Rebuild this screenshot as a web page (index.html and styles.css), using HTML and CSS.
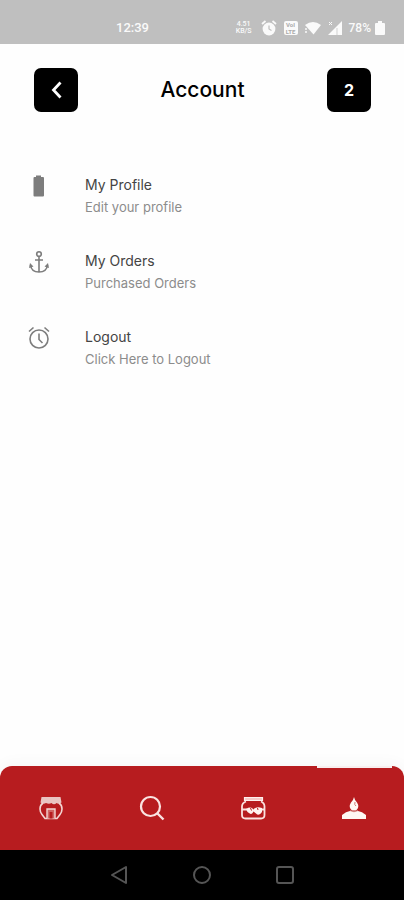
FILE: index.html
```html
<!DOCTYPE html>
<html lang="en">
<head>
<meta charset="utf-8">
<meta name="viewport" content="width=device-width, initial-scale=1">
<title>Account</title>
<link rel="stylesheet" href="styles.css">
</head>
<body>
<div class="status">
  <time class="clock">12:39</time>
  <div class="indicators">
    <span class="speed"><span>4.51</span><span>KB/S</span></span>
    <svg width="16" height="16" viewBox="0 0 16 16" aria-hidden="true"><circle cx="8" cy="9" r="6.4" fill="currentColor"/><path d="M1 4l3.500-3M15 4l-3.500-3" stroke="currentColor" stroke-width="1.800"/><path d="M8 5.500V9l2.500 1.500" fill="none" stroke="#bfbfbf" stroke-width="1.200"/></svg>
    <span class="volte"><span>VoI</span><span>LTE</span></span>
    <svg width="16" height="14" viewBox="0 0 16 14" aria-hidden="true"><path d="M0 4Q8-2 16 4L8.500 13.500z" fill="currentColor"/><path d="M1 7v6" stroke="currentColor" stroke-width="1.500" stroke-dasharray="2 1"/></svg>
    <svg width="14" height="14" viewBox="0 0 14 14" aria-hidden="true"><path d="M14 0v14H0z" fill="currentColor"/><path d="M1 1l3 3M4 1L1 4" stroke="currentColor"/><path d="M9 7v7" stroke="#bfbfbf" stroke-width=".7"/></svg>
    <span class="percent">78%</span>
    <svg width="10" height="14" viewBox="0 0 10 14" aria-hidden="true"><path d="M3 0h4v2h2q1 0 1 1v10q0 1-1 1H1q-1 0-1-1V3q0-1 1-1h2z" fill="currentColor"/></svg>
  </div>
</div>
<header class="header">
  <button class="square" type="button" aria-label="Back"><svg width="12" height="18" viewBox="0 0 12 18" aria-hidden="true"><path d="M10.500 1.500L3.500 9l7 7.500" fill="none" stroke="currentColor" stroke-width="2.800"/></svg></button>
  <h1 class="title">Account</h1>
  <button class="square count" type="button">2</button>
</header>
<main class="list">
  <a class="item" href="#profile">
    <svg class="icon" width="22" height="24" viewBox="0 0 22 24" aria-hidden="true"><path d="M8 3V1.500h5V3h2q1 0 1 1v17.500q0 1-1 1H6.500q-1 0-1-1V4q0-1 1-1z" fill="currentColor"/></svg>
    <span class="text"><span class="name">My Profile</span><span class="note">Edit your profile</span></span>
  </a>
  <a class="item" href="#orders">
    <svg class="icon" width="22" height="24" viewBox="0 0 22 24" aria-hidden="true"><g fill="none" stroke="currentColor" stroke-width="1.600"><circle cx="11" cy="4" r="2.300"/><path d="M11 6.500v16M7 10h8M2.500 15C3 19.500 6.500 22 11 22S19 19.500 19.500 15"/></g><path d="M1 18l1-5 3.500 3.500zM21 18l-1-5-3.500 3.500z" fill="currentColor"/></svg>
    <span class="text"><span class="name">My Orders</span><span class="note">Purchased Orders</span></span>
  </a>
  <a class="item" href="#logout">
    <svg class="icon" width="22" height="24" viewBox="0 0 22 24" aria-hidden="true"><g fill="none" stroke="currentColor" stroke-width="1.600"><circle cx="11" cy="13" r="9"/><path d="M11 7.500v6l3.500 3.500M1 5.500l4.500-4M21 5.500l-4.500-4"/></g></svg>
    <span class="text"><span class="name">Logout</span><span class="note">Click Here to Logout</span></span>
  </a>
</main>
<nav class="tabs" aria-label="Main">
  <a class="tab" href="#home" aria-label="Home"><svg width="26" height="26" viewBox="0 0 26 26" aria-hidden="true"><path d="M3.500 2h19l1 5.500q-2.500 2-5 .5-2.500 2.500-5 0-2.500 1.500-5.500 0-3 1.500-5.500-.5z" fill="#e9c4c2"/><path d="M5 8q-3 2-3 6 0 3 2 5.500L7 23.500h12l3-4q2-2.500 2-5.500 0-4-3-6" fill="none" stroke="#f3d4d2" stroke-width="1.600"/><path d="M9 23.500V14h8v9.500" fill="#cf6563" stroke="#f3d4d2" stroke-width="1.400"/><path d="M11.500 23.500V17h3v6.500z" fill="#b71c1f"/></svg></a>
  <a class="tab" href="#search" aria-label="Search"><svg width="26" height="26" viewBox="0 0 26 26" aria-hidden="true"><circle cx="11.500" cy="11.500" r="9.500" fill="none" stroke="#fae3e1" stroke-width="2.200"/><path d="M18 18l6.500 6.500" stroke="#fae3e1" stroke-width="2.400"/></svg></a>
  <a class="tab" href="#orders" aria-label="Orders"><svg width="26" height="26" viewBox="0 0 26 26" aria-hidden="true"><path d="M4.500 2.500h18v3h-18z" fill="#f7c9c7" stroke="#fff0ee" stroke-width="1.200"/><path d="M6 6.500Q2 8 2 11.500V20q0 3.500 3.500 3.500h15.500q3.500 0 3.500-3.500v-8.500Q24.500 8 21 6.500M2 14.500h5M19 14.500h5" fill="none" stroke="#fbe3e1" stroke-width="1.800"/><path d="M6 14q5-3 7.500.5Q16 11 22 13v4q-3 4.500-6 1.500l-2.500-2q-1.500 4-4.500 1.500-2-1-3-4z" fill="#fff3f0"/><path d="M10.500 13l1 2.500M17.500 13l.5 2" stroke="#b71c1f"/></svg></a>
  <a class="tab current" href="#account" aria-label="Account" aria-current="page"><svg width="26" height="26" viewBox="0 0 26 26" aria-hidden="true"><path d="M1 24v-4q4-3.500 8-4h8q4 .5 8 4v4z" fill="#fff8f4"/><path d="M13 2q-.5 3-3 5.500-3 4.500 1 8h4q4-3.500 1-8-2.500-2.500-3-5.500z" fill="#fff8f4"/><path d="M14 7q-1 3 1 4M9 15.500q4 2.500 8 0" fill="none" stroke="#d07672"/></svg></a>
</nav>
<div class="system">
  <button type="button" aria-label="System back"><svg width="18" height="20" viewBox="0 0 18 20" aria-hidden="true"><path d="M16 2v16L2 10z"/></svg></button>
  <button type="button" aria-label="System home"><svg width="18" height="20" viewBox="0 0 18 20" aria-hidden="true"><circle cx="9" cy="10" r="8"/></svg></button>
  <button type="button" aria-label="Recent apps"><svg width="18" height="20" viewBox="0 0 18 20" aria-hidden="true"><rect x="1" y="2" width="16" height="16" rx="2"/></svg></button>
</div>
</body>
</html>
```
FILE: styles.css
```css
* { box-sizing: border-box; }

body {
  margin: 0;
  min-height: 100vh;
  display: flex;
  flex-direction: column;
  background: #fefefe;
  color: #000;
  font-family: Inter, "Open Sans", sans-serif;
}

svg { display: block; flex: none; }
button { border: 0; padding: 0; font: inherit; cursor: pointer; }
a { color: inherit; text-decoration: none; }

.status {
  height: 44px;
  padding: 12px 19px 0 116px;
  display: flex;
  align-items: center;
  justify-content: space-between;
  background: #bfbfbf;
  color: #fafafa;
  font: 500 12px/16px Roboto, sans-serif;
}

.clock { font-size: 13px; }
.indicators { display: flex; align-items: center; gap: 7px; }
.speed, .volte { display: flex; flex-direction: column; align-items: center; font-size: 7px; line-height: 7px; }
.speed { margin-right: 2px; }
.volte { background: #fafafa; color: #aaa; border-radius: 2px; font-weight: 700; font-size: 6px; width: 14px; }
.percent { margin-right: -3px; }

.header {
  padding: 24px 33px 0 34px;
  display: flex;
  align-items: center;
  justify-content: space-between;
}

.square {
  width: 44px;
  height: 44px;
  display: flex;
  align-items: center;
  justify-content: center;
  border-radius: 7px;
  background: #000;
  color: #fff;
}

.count { font-size: 16px; font-weight: 700; }
.title { margin: 0; font-size: 21px; line-height: 30px; font-weight: 500; }

.list {
  flex: 1;
  padding: 62px 28px 0;
  display: flex;
  flex-direction: column;
  gap: 32px;
}

.item { display: flex; align-items: flex-start; gap: 35px; }
.icon { color: #7d7d7d; }
.text { display: flex; flex-direction: column; line-height: 22px; }
.name { color: #444; font-size: 14px; }
.note { color: #8c8c8c; font-size: 13px; }

.tabs {
  height: 84px;
  display: grid;
  grid-template-columns: repeat(4, 1fr);
  background: #b71c1f;
  border-radius: 12px 12px 0 0;
  box-shadow: 0 -2px 16px #0000000a;
}

.tab { display: flex; align-items: center; justify-content: center; }
.current { position: relative; }

.current::before {
  content: "";
  position: absolute;
  top: 0;
  left: 14px;
  right: 12px;
  height: 2px;
  background: #f8eeee;
}

.system {
  height: 50px;
  display: flex;
  align-items: center;
  justify-content: center;
  gap: 65px;
  background: #000;
}

.system button { background: none; }
.system svg { fill: none; stroke: #555; stroke-width: 2; stroke-linejoin: round; }
```
